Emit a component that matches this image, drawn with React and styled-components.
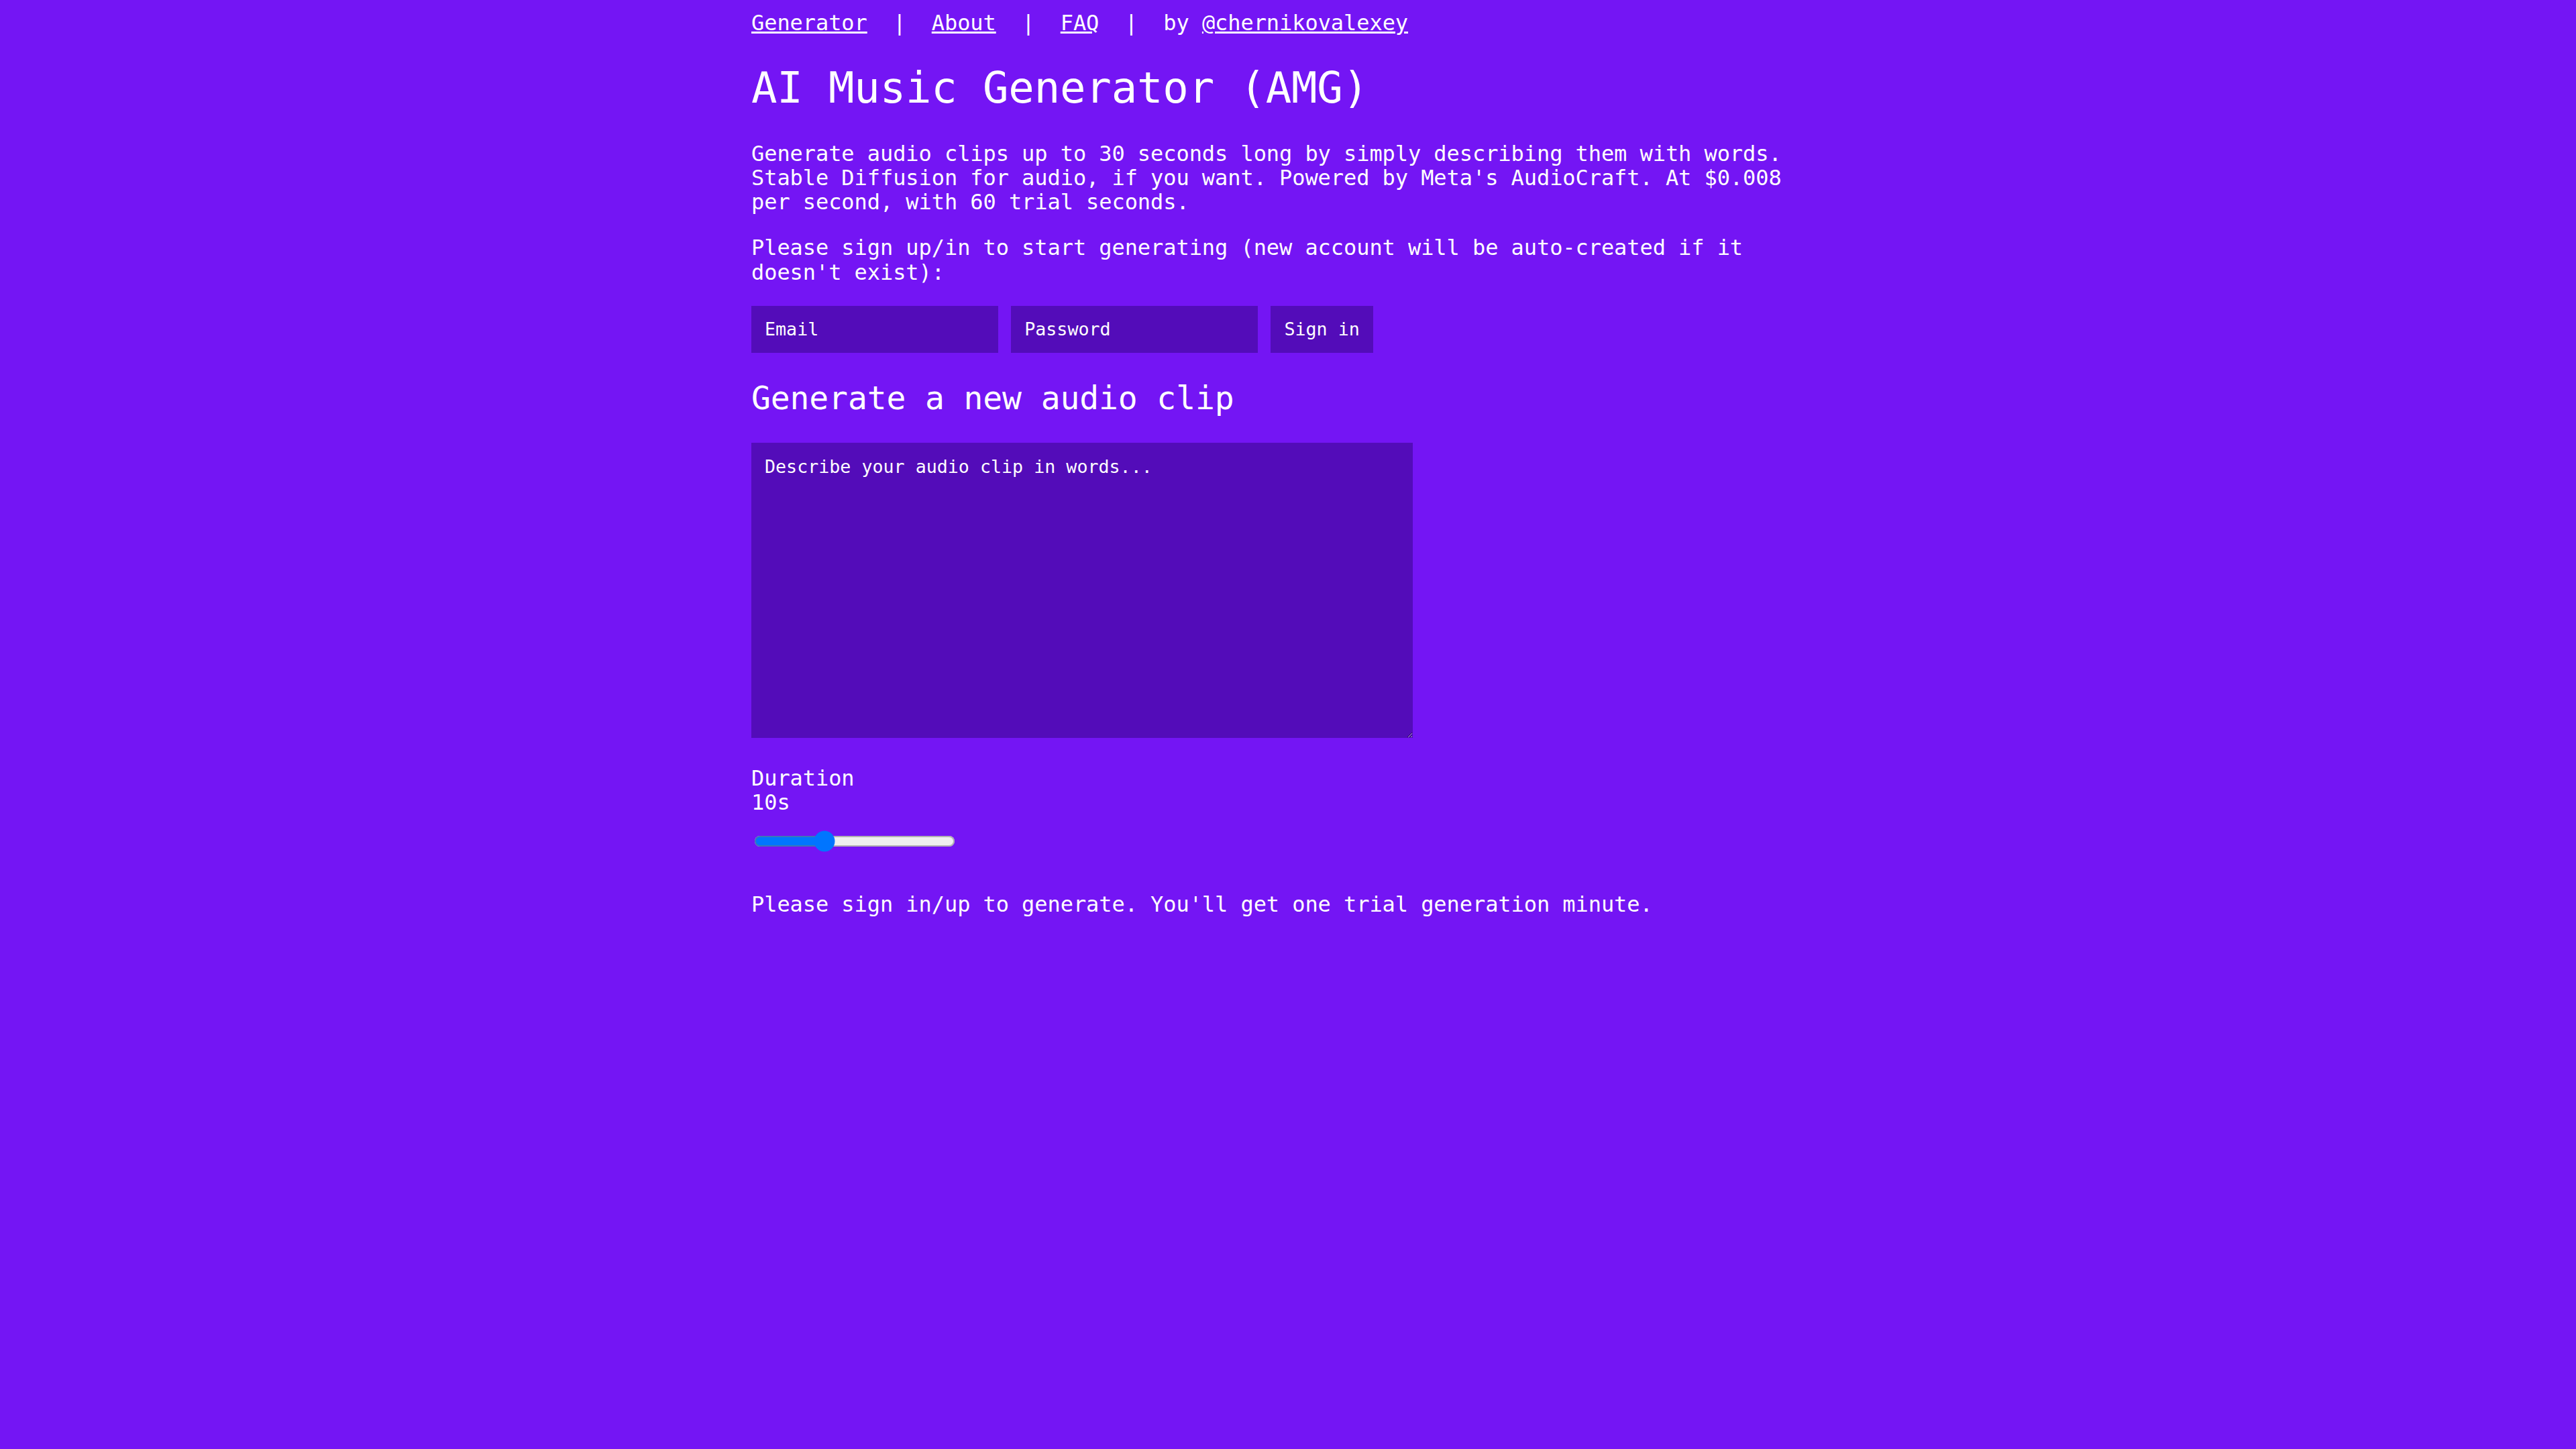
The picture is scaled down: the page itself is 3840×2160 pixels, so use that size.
import React, { useState } from "react"
import styled, { createGlobalStyle } from "styled-components"

const GlobalStyle = createGlobalStyle`
  html, body {
    margin: 0;
    background-color: #7415f4;
  }
`

// whole page is laid out at 1x and doubled, like the original hi-dpi capture
const Page = styled.div`
  zoom: 2;
  padding: 8px;
  min-height: calc(100vh / 2 - 16px);
  color: white;
  font-family: "DejaVu Sans Mono", "Liberation Mono", monospace;
  font-size: 16px;
  line-height: 1.133;
  letter-spacing: -0.035px;
`

const Main = styled.main`
  max-width: 800px;
  margin: 0 auto;
`

const Nav = styled.nav`
  white-space: pre;
`

const NavLink = styled.a`
  color: white;
  text-decoration: underline;
`

const Title = styled.h1`
  font-size: 2em;
  margin: 0.67em 0;
  font-weight: normal;
  letter-spacing: -0.1px;
`

const Text = styled.p`
  margin: 1em 0;
`

const AuthForm = styled.form`
  margin: 0;
`

const Field = styled.input`
  box-sizing: border-box;
  width: 184px;
  height: 35px;
  padding: 0 10px;
  border: none;
  outline: none;
  background-color: #530cb9;
  color: white;
  font-family: inherit;
  font-size: 13.333px;

  &::placeholder {
    color: white;
    opacity: 1;
  }
`

const Button = styled.button`
  box-sizing: border-box;
  height: 35px;
  padding: 0 10px;
  border: none;
  background-color: #530cb9;
  color: white;
  font-family: inherit;
  font-size: 13.333px;
  cursor: pointer;
`

const Subtitle = styled.h2`
  font-size: 1.5em;
  margin: 0.83em 0;
  font-weight: normal;
  letter-spacing: -0.06px;
`

const Prompt = styled.textarea`
  box-sizing: border-box;
  display: block;
  width: 493px;
  height: 220px;
  padding: 10px;
  border: none;
  outline: none;
  background-color: #530cb9;
  color: white;
  font-family: inherit;
  font-size: 13.333px;
  line-height: normal;

  &::placeholder {
    color: white;
    opacity: 1;
  }
`

const DurationBlock = styled.div`
  margin-top: 21px;
`

const Slider = styled.input`
  display: block;
  width: 150px;
  margin: 12px 2px 0;
`

const Footnote = styled.p`
  margin: 30px 0 16px;
`

export default function App() {
  const [duration, setDuration] = useState(10)

  return (
    <Page>
      <GlobalStyle />
      <Main>
        <Nav>
          <NavLink href="#">Generator</NavLink>{"  |  "}
          <NavLink href="#">About</NavLink>{"  |  "}
          <NavLink href="#">FAQ</NavLink>{"  |  by "}
          <NavLink href="#">@chernikovalexey</NavLink>
        </Nav>

        <Title>AI Music Generator (AMG)</Title>

        <Text>
          Generate audio clips up to 30 seconds long by simply describing them with words.
          Stable Diffusion for audio, if you want. Powered by Meta's AudioCraft. At $0.008
          per second, with 60 trial seconds.
        </Text>

        <Text>
          Please sign up/in to start generating (new account will be auto-created if it doesn't exist):
        </Text>

        <AuthForm onSubmit={e => e.preventDefault()}>
          <Field type="email" placeholder="Email" /> <Field type="password" placeholder="Password" /> <Button type="submit">Sign in</Button>
        </AuthForm>

        <Subtitle>Generate a new audio clip</Subtitle>

        <Prompt placeholder="Describe your audio clip in words..." />

        <DurationBlock>
          <div>Duration</div>
          <div>{duration}s</div>
          <Slider
            type="range"
            min="5"
            max="20"
            value={duration}
            onChange={e => setDuration(Number(e.target.value))}
          />
        </DurationBlock>

        <Footnote>Please sign in/up to generate. You'll get one trial generation minute.</Footnote>
      </Main>
    </Page>
  )
}
